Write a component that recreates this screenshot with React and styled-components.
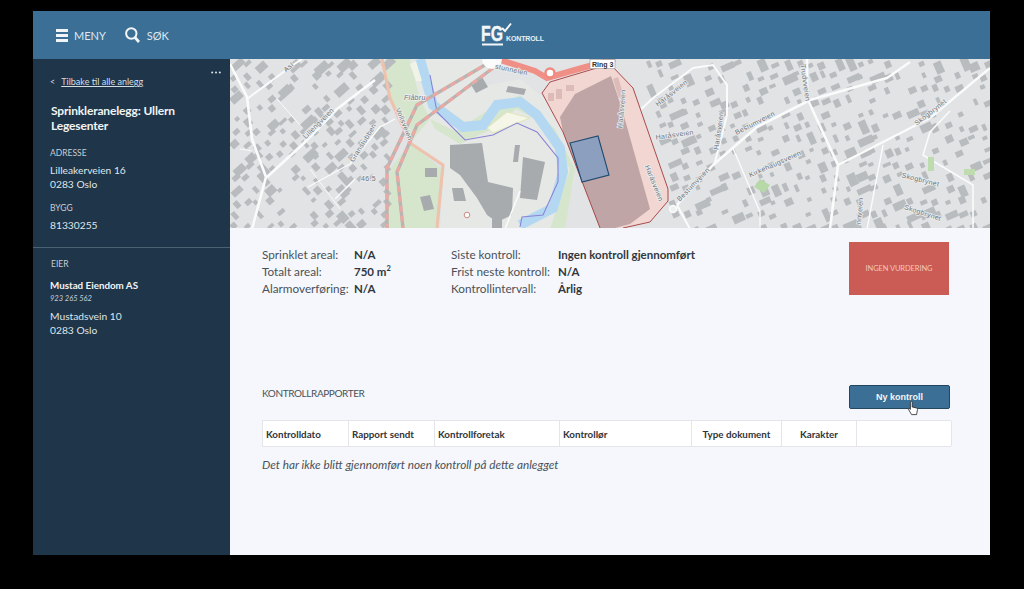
import React from 'react'
import styled, { createGlobalStyle } from 'styled-components'

const FONT = `Lato, "Noto Sans", "Liberation Sans", sans-serif`

const Global = createGlobalStyle`
  html, body { margin: 0; height: 100%; background: #000; overflow: hidden; }
  body { font-family: ${FONT}; }
  * { box-sizing: border-box; }
`

const Frame = styled.div`
  width: 957px;
  height: 544px;
  margin: 11px 0 0 33px;
  display: flex;
  flex-direction: column;
  background: #f5f7fc;
`
const Header = styled.header`
  height: 48px;
  flex: none;
  background: #3b6f95;
  display: flex;
  align-items: center;
  padding-left: 23px;
  position: relative;
  color: #dfe8ef;
  font-size: 11px;
`
const HeaderItem = styled.div`
  display: flex;
  align-items: center;
  gap: ${(p) => p.$gap}px;
  margin-right: 19px;
`
const Logo = styled.svg`
  position: absolute;
  left: 448px;
  top: 11px;
`
const Body = styled.div`
  flex: 1;
  display: flex;
  min-height: 0;
`
const Sidebar = styled.aside`
  width: 197px;
  background: #1f3549;
  color: #e8edf1;
  position: relative;
  padding-top: 17px;
`
const Dots = styled.svg`
  position: absolute;
  right: 9px;
  top: 12px;
`
const SideBlock = styled.div`
  padding-left: ${(p) => p.$left || 17}px;
  margin-top: ${(p) => p.$top || 0}px;
`
const BackLink = styled.div`
  font-size: 9px;
  line-height: 12px;
  color: #d5dde4;
  a { color: inherit; text-decoration: underline; margin-left: 6px; }
`
const Title = styled.h1`
  margin: 15px 0 0 1px;
  font-size: 12px;
  line-height: 15px;
  font-weight: 700;
  letter-spacing: -0.15px;
  color: #f1f4f6;
  width: 150px;
`
const SideLabel = styled.div`
  font-size: 8.5px;
  line-height: 12px;
  color: #c5ced6;
`
const SideText = styled.div`
  font-size: 10.25px;
  line-height: 14px;
  margin-top: ${(p) => p.$top || 0}px;
  color: #dfe5ea;
`
const Divider = styled.hr`
  margin: 15px 0 0;
  border: 0;
  border-top: 1px solid #4c6172;
`
const OwnerName = styled.div`
  font-size: 9.8px;
  line-height: 13px;
  font-weight: 700;
  color: #f1f4f6;
  margin-top: 9px;
`
const OwnerOrg = styled.div`
  font-size: 7.5px;
  line-height: 11px;
  font-style: italic;
  margin-top: 1px;
  color: #c5ced6;
`
const Main = styled.main`
  flex: 1;
  min-width: 0;
  display: flex;
  flex-direction: column;
`
const MapBox = styled.svg`
  display: block;
  width: 760px;
  height: 169px;
  flex: none;
  background: #e1e3e5;
`
const Content = styled.div`
  padding: 14px 38px 0 32px;
`
const TopRow = styled.div`
  display: flex;
  height: 53px;
`
const Facts = styled.div`
  display: grid;
  grid-template-columns: ${(p) => p.$label}px auto;
  grid-auto-rows: 17px;
  align-content: start;
  margin-top: 4px;
  width: ${(p) => p.$width}px;
  font-size: 11.75px;
  line-height: 17px;
  color: #4a5158;
  white-space: nowrap;
`
const Value = styled.b`
  color: #31373d;
  font-size: 11.5px;
  font-weight: 700;
  sup { font-size: 7.5px; line-height: 0; }
`
const Status = styled.div`
  width: 100px;
  height: 53px;
  margin-left: auto;
  margin-right: 3px;
  background: #cb5b55;
  color: #f3c6bd;
  font-size: 7.5px;
  letter-spacing: -0.1px;
  display: flex;
  align-items: center;
  justify-content: center;
`
const ReportHead = styled.div`
  display: flex;
  align-items: center;
  justify-content: space-between;
  margin-top: 90px;
  height: 24px;
  padding-right: 2px;
`
const ReportTitle = styled.h2`
  margin: 0 0 9px;
  font-size: 10px;
  line-height: 14px;
  font-weight: 400;
  letter-spacing: -0.4px;
  color: #4a5158;
`
const Button = styled.button`
  position: relative;
  width: 101px;
  height: 24px;
  padding: 0;
  background: #3b6f95;
  border: 1px solid #24465f;
  border-radius: 2px;
  color: #f2f5f7;
  font-family: "Liberation Sans", sans-serif;
  font-size: 9px;
  font-weight: 700;
`
const Pointer = styled.svg`
  position: absolute;
  left: 58px;
  top: 15px;
`
const Table = styled.div`
  margin-top: 11px;
  display: grid;
  grid-template-columns: 86px 86px 125px 132px 90px 75px 95px;
  height: 27px;
  width: 689px;
  background: #fff;
  border: 1px solid #e3e5e8;
  border-right: 0;
`
const HeadCell = styled.div`
  border-right: 1px solid #e3e5e8;
  display: flex;
  align-items: center;
  justify-content: ${(p) => (p.$center ? 'center' : 'flex-start')};
  padding-left: ${(p) => (p.$center ? 0 : 3)}px;
  font-size: 9.8px;
  font-weight: 700;
  color: #2f353a;
  white-space: nowrap;
`
const Empty = styled.p`
  margin: 10px 0 0;
  font-size: 11.75px;
  line-height: 16px;
  font-style: italic;
  color: #4a5158;
`

// buildings are only texture, so a small seeded generator is enough
function makeBuildings() {
  let seed = 11
  const rnd = () => {
    seed = (seed * 16807) % 2147483647
    return seed / 2147483647
  }
  const list = []
  const zones = [
    { x0: 0, x1: 158, y0: 0, y1: 170, step: 11.5, angle: -42 },
    { x0: 400, x1: 760, y0: 0, y1: 170, step: 12.5, angle: -24 },
  ]
  zones.forEach((z) => {
    for (let y = z.y0; y < z.y1; y += z.step) {
      for (let x = z.x0; x < z.x1; x += z.step) {
        const px = x + rnd() * 5
        const py = y + rnd() * 5
        if (rnd() < 0.24) continue
        // keep clear of the property polygon on the right
        if (z.x0 > 300 && px < 408 + (py / 170) * 36) continue
        const big = rnd() < 0.18
        const w = big ? 10 + rnd() * 6 : 4 + rnd() * 5
        const h = big ? 6 + rnd() * 3 : 3.5 + rnd() * 4
        list.push({ x: px, y: py, w, h, a: z.angle + (rnd() < 0.3 ? 90 : 0) })
      }
    }
  })
  return list
}
const buildings = makeBuildings()

const bigBuildings = [
  '220,86 252,84 258,123 283,129 282,156 267,163 257,156 247,139 230,116 220,109',
  '293,98 315,103 307,141 290,139',
  '285,86 290,86 288,103 283,103',
  '195,109 207,109 207,118 195,118',
  '222,129 233,129 236,142 224,142',
  '262,160 272,160 272,170 262,170',
  '190,138 200,136 204,150 194,152',
  '240,24 252,18 258,28 246,34',
  '278,27 296,30 294,36 276,33',
]

const whiteRoads = [
  ['M0 5 L17 38 L22 80 L36 118 L22 170', 2.6],
  ['M17 40 L63 6 L72 0', 2],
  ['M145 21 L107 50 L73 85 L37 118', 2.8],
  ['M165 60 L150 68 L120 105 L78 128', 1.4],
  ['M105 140 L125 120', 1.4],
  ['M47 40 L70 66', 1],
  ['M80 110 L110 150', 1],
  ['M10 90 L22 92', 1],
  ['M447 146 L483 106 L527 68 L580 41 L657 19 L680 3', 2.6],
  ['M407 54 L423 39 L463 9 L483 6 L497 26 L497 56 L485 103', 2],
  ['M577 0 L577 39 L608 106 L600 170', 2.6],
  ['M760 9 L700 59 L608 106', 2.4],
  ['M653 86 L637 170', 1.4],
  ['M503 89 L530 153 L530 170', 1.4],
  ['M700 73 L693 96 L743 126 L743 170', 1.6],
  ['M700 73 L720 52', 1.6],
  ['M290 132 L275 170', 1.6],
  ['M447 146 L460 170', 2],
]

const labels = [
  ['Lillengveien', 90, 66, -45, false],
  ['Granstubben', 135, 85, -58, false],
  ['Vollsveien', 172, 66, 68, false],
  ['Flåbru', 174, 41, 0, true],
  ['46.5', 131, 122, 0, false],
  ['stunnelen', 281, 13, 12, false],
  ['Asl', 60, 10, -40, false],
  ['Haråsveien', 443, 36, -38, false],
  ['Haråsveien', 491, 72, -82, false],
  ['Haråsveien', 445, 78, -8, false],
  ['Haråsveien', 394, 50, -85, false],
  ['Haråsveien', 422, 125, 68, false],
  ['Bestumveien', 526, 66, -27, false],
  ['Bestumveien', 465, 127, -46, false],
  ['Kirkehaugsveien', 546, 107, -24, false],
  ['Skogbrynet', 702, 55, -38, false],
  ['Skogbrynet', 690, 123, 14, false],
  ['Skogbrynet', 692, 156, 18, false],
  ['Trudvveien', 573, 24, 82, false],
  ['nnveien', 632, 152, -85, false],
]

const MapLabel = styled.text`
  font-family: "Liberation Sans", sans-serif;
  font-size: 7px;
  letter-spacing: 0.3px;
  fill: #6f7478;
  paint-order: stroke;
  stroke: #eceef0;
  stroke-width: 1.5px;
  font-style: ${(p) => (p.$italic ? 'italic' : 'normal')};
`

function MapView() {
  return (
    <MapBox viewBox="0 0 760 169">
      {/* land cover */}
      <path d="M152 0 L270 0 L240 30 L290 20 L340 60 L345 120 L330 170 L210 170 L213 106 L180 84 L160 39 Z" fill="#e6e8e6" />
      <path d="M160 39 L180 84 L160 110 L155 170 L172 170 L205 170 L214 112 L180 84 L200 60 L225 72 L260 50 L290 36 L325 70 L345 110 L335 170 L320 170 L340 110 L310 62 L286 50 L262 70 L230 85 L205 70 L190 40 L180 0 L155 0 Z" fill="#d6e6cd" />
      {/* buildings */}
      {buildings.map((b, i) => (
        <rect key={i} x={b.x} y={b.y} width={b.w} height={b.h} fill="#b9bcbf" transform={`rotate(${b.a} ${b.x + b.w / 2} ${b.y + b.h / 2})`} />
      ))}
      {bigBuildings.map((p) => (
        <polygon key={p} points={p} fill="#a7abae" />
      ))}
      {/* river */}
      <path d="M190 0 L203 46 L233 68 L253 66 L267 46 L290 43 L307 56 L330 89 L333 113 L323 149 L290 166" fill="none" stroke="#b5d8f2" strokeWidth="10" />
      <path d="M257 69 L277 53 L300 59 L287 64 L263 74 Z" fill="#f5f6e8" stroke="#dfe6b8" strokeWidth="1" />
      <path d="M180 5 L186 2 L192 22 L186 22 Z" fill="#f0f3e8" />
      <path d="M200 16 L207 53 L235 81 L263 76 L287 64 L307 73 L328 99 L328 123 L313 156 L292 158 L290 168" fill="none" stroke="#8a83d6" strokeWidth="1.1" />
      {/* Vollsveien */}
      <path d="M152 0 L160 39 L180 84 L213 106 L207 169" fill="none" stroke="#eec3ad" strokeWidth="3.2" />
      {/* railway */}
      <path d="M260 3 L187 46 L157 109 L157 169" fill="none" stroke="#b9b4b2" strokeWidth="3.4" />
      <path d="M260 3 L187 46 L157 109 L157 169" fill="none" stroke="#eca8a3" strokeWidth="3" strokeDasharray="6 4" />
      <path d="M263 9 L187 66 L167 113 L173 169" fill="none" stroke="#b9b4b2" strokeWidth="3.4" />
      <path d="M263 9 L187 66 L167 113 L173 169" fill="none" stroke="#eca8a3" strokeWidth="3" strokeDasharray="6 4" />
      {whiteRoads.map(([d, w]) => (
        <path key={d} d={d} fill="none" stroke="#fafbfb" strokeWidth={w} strokeLinejoin="round" />
      ))}
      {/* property and ring road */}
      <path d="M312 34 L320 23 L380 5 L403 29 L438 130 L438 142 L420 163 L393 169 L370 169 L333 73 Z" fill="#f1d6d2" />
      <path d="M333 73 L330 58 L345 35 L381 17 L392 50 L420 150 L400 165 L385 169 L370 169 Z" fill="#bfa5a5" />
      <path d="M318 34 h6 v8 h-6z M326 30 h6 v10 h-6z M336 26 h8 v6 h-8z" fill="#ddbcb8" />
      <path d="M383 20 L388 18 L396 44 L391 46 Z" fill="#ddbcb8" />
      <path d="M312 34 L320 23 L380 5 L403 29 L438 130 L438 142 L420 163 L393 169 M370 169 L333 73 L312 34" fill="none" stroke="#a33a3c" strokeWidth="0.9" />
      <path d="M267 0 L305 12 L317 19 L352 9 L385 0" fill="none" stroke="#ef8f85" strokeWidth="6" />
      <circle cx="262" cy="0" r="10" fill="#fafbfb" />
      <circle cx="320" cy="14" r="4.5" fill="#fff" stroke="#ee8a80" strokeWidth="2.5" />
      <polygon points="340,84 368,77 379,116 352,123" fill="#8d9fbf" stroke="#1f4a70" strokeWidth="1.1" />
      <circle cx="443" cy="150" r="3.4" fill="#eef0f1" stroke="#fafbfb" strokeWidth="1.5" />
      <circle cx="237" cy="156" r="2.8" fill="#fff" stroke="#d08a80" />
      {/* small green patches */}
      <polygon points="530,120 540,126 534,134 524,128" fill="#b7d9a8" />
      <rect x="698" y="98" width="6" height="14" fill="#bfdcae" />
      <rect x="734" y="110" width="11" height="6" fill="#bfdcae" />
      {labels.map(([text, x, y, a, italic], i) => (
        <MapLabel key={i} x={x} y={y} $italic={italic} textAnchor={a === 0 ? 'start' : 'middle'} transform={`rotate(${a} ${x} ${y})`}>
          {text}
        </MapLabel>
      ))}
      <rect x="360" y="0.5" width="25" height="9" fill="#fff" stroke="#999" strokeWidth="0.6" />
      <text x="362" y="7.5" fontFamily='"Liberation Sans", sans-serif' fontSize="7" fontWeight="700" fill="#333">Ring 3</text>
    </MapBox>
  )
}

const columns = [
  ['Kontrolldato'],
  ['Rapport sendt'],
  ['Kontrollforetak'],
  ['Kontrollør'],
  ['Type dokument', true],
  ['Karakter', true],
  ['', true],
]

export default function App() {
  return (
    <>
      <Global />
      <Frame>
        <Header>
          <HeaderItem $gap={6}>
            <svg width="12" height="13" viewBox="0 0 12 13">
              <path d="M0 0h12v3H0zM0 5h12v3H0zM0 10h12v3H0z" fill="#f2f5f7" />
            </svg>
            MENY
          </HeaderItem>
          <HeaderItem $gap={7}>
            <svg width="15" height="16" viewBox="0 0 15 16" fill="none" stroke="#f2f5f7">
              <circle cx="6.3" cy="6.5" r="5.2" strokeWidth="2" />
              <path d="M10 10.5 L14 15" strokeWidth="2.8" />
            </svg>
            SØK
          </HeaderItem>
          <Logo width="66" height="26" viewBox="0 0 66 26">
            <text x="0" y="19" transform="scale(0.72 1)" fontFamily='"Liberation Sans", sans-serif' fontSize="22" fontWeight="700" fill="#f4f7f9" stroke="#f4f7f9" strokeWidth="0.4">FG</text>
            <rect x="1" y="21.5" width="21" height="2" fill="#f4f7f9" />
            <path d="M21 6 L24 9 L30 1.5" fill="none" stroke="#f4f7f9" strokeWidth="2" />
            <text x="25" y="19" fontFamily='"Liberation Sans", sans-serif' fontSize="7" fontWeight="700" fill="#eaf0f4" textLength="38">KONTROLL</text>
          </Logo>
        </Header>
        <Body>
          <Sidebar>
            <Dots width="10" height="3" viewBox="0 0 10 3">
              <circle cx="1.2" cy="1.5" r="1" fill="#dfe5ea" />
              <circle cx="5" cy="1.5" r="1" fill="#dfe5ea" />
              <circle cx="8.8" cy="1.5" r="1" fill="#dfe5ea" />
            </Dots>
            <SideBlock>
              <BackLink>
                &lt;<a>Tilbake til alle anlegg</a>
              </BackLink>
              <Title>Sprinkleranelegg: Ullern Legesenter</Title>
            </SideBlock>
            <SideBlock $top={14}>
              <SideLabel>ADRESSE</SideLabel>
              <SideText $top={4}>Lilleakerveien 16</SideText>
              <SideText>0283 Oslo</SideText>
            </SideBlock>
            <SideBlock $top={11}>
              <SideLabel>BYGG</SideLabel>
              <SideText $top={4}>81330255</SideText>
            </SideBlock>
            <Divider />
            <SideBlock $left={18} $top={10}>
              <SideLabel>EIER</SideLabel>
            </SideBlock>
            <SideBlock>
              <OwnerName>Mustad Eiendom AS</OwnerName>
              <OwnerOrg>923 265 562</OwnerOrg>
              <SideText $top={5}>Mustadsvein 10</SideText>
              <SideText>0283 Oslo</SideText>
            </SideBlock>
          </Sidebar>
          <Main>
            <MapView />
            <Content>
              <TopRow>
                <Facts $label={92} $width={189}>
                  <span>Sprinklet areal:</span><Value>N/A</Value>
                  <span>Totalt areal:</span><Value>750 m<sup>2</sup></Value>
                  <span>Alarmoverføring:</span><Value>N/A</Value>
                </Facts>
                <Facts $label={107} $width={300}>
                  <span>Siste kontroll:</span><Value>Ingen kontroll gjennomført</Value>
                  <span>Frist neste kontroll:</span><Value>N/A</Value>
                  <span>Kontrollintervall:</span><Value>Årlig</Value>
                </Facts>
                <Status>INGEN VURDERING</Status>
              </TopRow>
              <ReportHead>
                <ReportTitle>KONTROLLRAPPORTER</ReportTitle>
                <Button>
                  Ny kontroll
                  <Pointer width="10" height="15" viewBox="0 0 10 15">
                    <path d="M2.4 1.2 C2.4 0 4.2 0 4.2 1.2 V6 L8.6 7 C9.4 7.3 9.6 8 9.4 8.8 L8.6 13.6 H3.6 L0.6 8.6 C0.2 7.7 1.2 7 2.4 8.4 Z" fill="#fff" stroke="#222" strokeWidth="0.8" />
                  </Pointer>
                </Button>
              </ReportHead>
              <Table>
                {columns.map(([name, center], i) => (
                  <HeadCell key={i} $center={center}>{name}</HeadCell>
                ))}
              </Table>
              <Empty>Det har ikke blitt gjennomført noen kontroll på dette anlegget</Empty>
            </Content>
          </Main>
        </Body>
      </Frame>
    </>
  )
}
